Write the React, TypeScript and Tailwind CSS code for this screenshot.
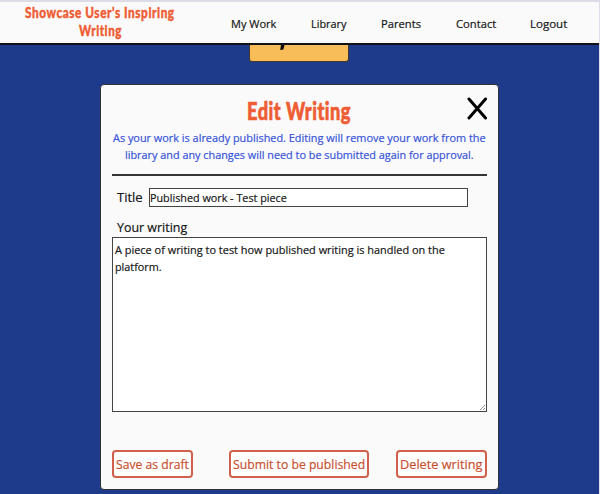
import { useLayoutEffect, useRef } from "react";

/* One line of text, condensed or widened to the measure given by its box. */
function Line({ text, className }: { text: string; className: string }) {
  const box = useRef<HTMLSpanElement>(null);
  const inner = useRef<HTMLSpanElement>(null);
  useLayoutEffect(() => {
    if (box.current && inner.current) {
      const ratio = box.current.clientWidth / inner.current.offsetWidth;
      inner.current.style.transform = `scaleX(${ratio})`;
    }
  }, []);
  return (
    <span ref={box} className={`block shrink-0 whitespace-nowrap ${className}`}>
      <span ref={inner} className="inline-block origin-left">{text}</span>
    </span>
  );
}

const display = "font-['Lato',sans-serif] font-black tracking-[0.7px] text-[#ee5d34]";
const action = "flex h-[28px] items-center rounded-[4px] border-2 border-[#d0604c] bg-white pl-[2px] text-[13.5px] leading-[20px] text-[#c9502f] [-webkit-text-stroke:0.2px_#c9502f]";

export default function App() {
  return (
    <div className="relative h-[494px] w-[600px] overflow-hidden bg-[#1e3a8a] font-['Open_Sans','Noto_Sans',sans-serif] text-[#161616]">
      <header className="flex h-[45px] border-t-2 border-b-2 border-t-[#dddbe6] border-b-[#111318] bg-[#fafafa]">
        <div className={`ml-[25px] flex w-[150px] flex-col items-center pt-[2px] text-[14.5px] leading-[18px] [-webkit-text-stroke:0.4px_#ee5d34] ${display}`}>
          <Line text="Showcase User's Inspiring" className="w-[150px]" />
          <Line text="Writing" className="w-[43px]" />
        </div>
        <nav className="ml-[56px] flex items-center pt-[2px] text-[11.5px] leading-4 [-webkit-text-stroke:0.2px_#161616]">
          <a><Line text="My Work" className="w-[45px]" /></a>
          <a className="ml-[35px]"><Line text="Library" className="w-[36px]" /></a>
          <a className="ml-[34px]"><Line text="Parents" className="w-[40px]" /></a>
          <a className="ml-[35px]"><Line text="Contact" className="w-[40px]" /></a>
          <a className="ml-[34px]"><Line text="Logout" className="w-[37px]" /></a>
        </nav>
      </header>

      <div className="ml-[249px] h-[17px] w-[100px] rounded-b-[3px] border border-t-0 border-[#40372d] bg-[#f8bd59]">
        <svg className="ml-[29px] block h-[6px] w-[8px]" viewBox="0 0 8 6">
          <path d="M2 0h3.5L4.4 4.5 1.2 5Z" fill="#080808" />
        </svg>
      </div>

      <main className="mt-[22px] ml-[100px] h-[406px] w-[399px] rounded-[4px] border border-[#303238] bg-[#fafafa] px-[11px]">
        <div className="flex h-[44px]">
          <h1 className={`ml-[135px] pt-[8px] text-[25px] leading-[34px] [-webkit-text-stroke:0.7px_#ee5d34] ${display}`}>
            <Line text="Edit Writing" className="w-[104px]" />
          </h1>
          <button aria-label="Close" className="mt-[12px] ml-[116px] h-[23px] w-[21px]">
            <svg viewBox="0 0 21 23" className="h-[23px] w-[21px]" fill="none" stroke="#000" strokeWidth="3" strokeLinecap="round">
              <path d="M2 2 18.5 21M18.5 2 2 21" />
            </svg>
          </button>
        </div>
        <div className="flex h-[47px] flex-col items-center border-b-2 border-[#353535] text-[11.5px] leading-[17px] text-[#3652d9] [-webkit-text-stroke:0.2px_#3652d9]">
          <Line text="As your work is already published. Editing will remove your work from the" className="w-[373px]" />
          <Line text="library and any changes will need to be submitted again for approval." className="w-[349px]" />
        </div>

        <div className="mt-[12px] flex h-[19px] items-center pl-[5px] [-webkit-text-stroke:0.2px_#161616]">
          <label className="-mt-[2px] text-[13.5px] leading-[18px]"><Line text="Title" className="w-[26px]" /></label>
          <div className="ml-[6px] flex h-[19px] w-[319px] items-center border border-[#444] bg-white text-[11.5px] leading-4">
            <Line text="Published work - Test piece" className="w-[137px]" />
          </div>
        </div>
        <label className="mt-[11px] mb-px block pl-[5px] text-[13.5px] leading-[18px] [-webkit-text-stroke:0.2px_#161616]">
          <Line text="Your writing" className="w-[70px]" />
        </label>
        <div className="flex h-[175px] w-[375px] flex-col border border-[#444] bg-white pt-[3px] pl-[2px] text-[11.5px] leading-[17px] [-webkit-text-stroke:0.2px_#161616]">
          <Line text="A piece of writing to test how published writing is handled on the" className="w-[330px]" />
          <Line text="platform." className="w-[47px]" />
          <svg className="mt-auto ml-auto h-[7px] w-[7px]" viewBox="0 0 7 7" stroke="#777" strokeWidth=".8">
            <path d="M1 6 6 1M4 6 6 4" />
          </svg>
        </div>
        <div className="mt-[38px] flex justify-between">
          <button className={`w-[81px] ${action}`}><Line text="Save as draft" className="w-[73px]" /></button>
          <button className={`ml-[9px] w-[140px] ${action}`}><Line text="Submit to be published" className="w-[132px]" /></button>
          <button className={`w-[91px] ${action}`}><Line text="Delete writing" className="w-[82px]" /></button>
        </div>
      </main>
      <div className="absolute top-0 right-0 h-full w-px bg-[#dedee8]" />
    </div>
  );
}
